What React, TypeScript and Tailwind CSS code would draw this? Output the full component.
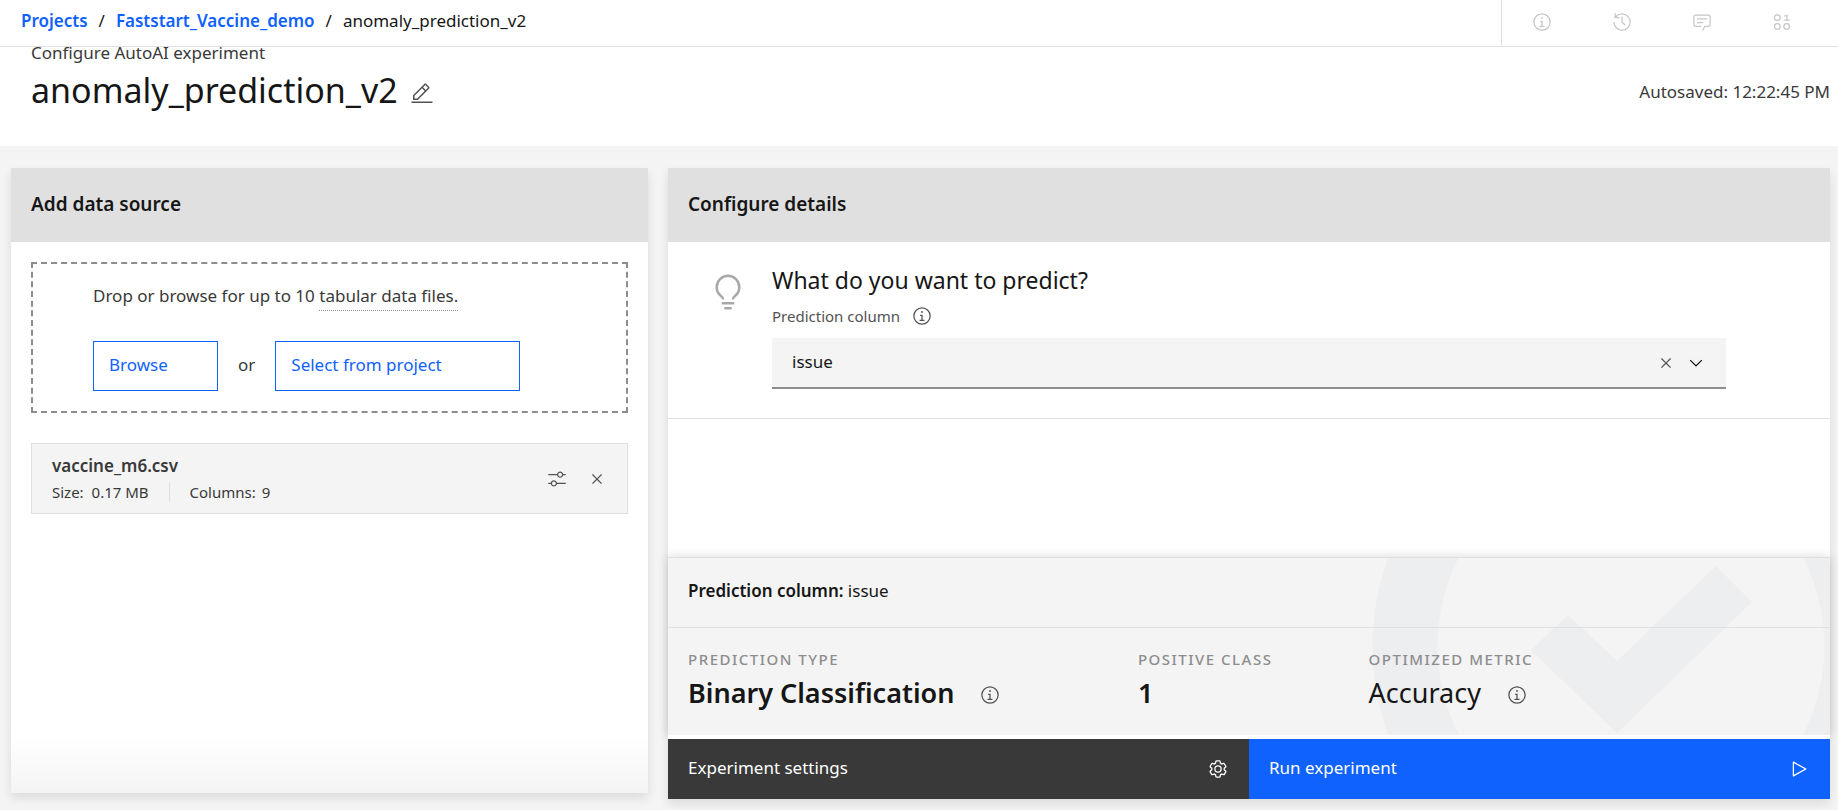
import React, { useState } from 'react';

const ICONS = {
  info: [
    'M17 22 17 14 13 14 13 16 15 16 15 22 12 22 12 24 20 24 20 22z',
    'M16,8a1.5,1.5,0,1,0,1.5,1.5A1.5,1.5,0,0,0,16,8Z',
    'M16,30A14,14,0,1,1,30,16,14,14,0,0,1,16,30ZM16,4A12,12,0,1,0,28,16,12,12,0,0,0,16,4Z',
  ],
  history: [
    'M20.59 22 15 16.41 15 7 17 7 17 15.58 22 20.59 20.59 22z',
    'M16,2A13.94,13.94,0,0,0,6,6.23V2H4v8h8V8H7.08A12,12,0,1,1,4,16H2A14,14,0,1,0,16,2Z',
  ],
  chat: [
    'M17.74,30,16,29l4-7h6a2,2,0,0,0,2-2V8a2,2,0,0,0-2-2H6A2,2,0,0,0,4,8V20a2,2,0,0,0,2,2h9v2H6a4,4,0,0,1-4-4V8A4,4,0,0,1,6,4H26a4,4,0,0,1,4,4V20a4,4,0,0,1-4,4H21.16Z',
    'M8 10H24V12H8z',
    'M8 16H18V18H8z',
  ],
  data: [
    'M8.5,3.5a5.5,5.5,0,1,0,5.5,5.5A5.5,5.5,0,0,0,8.5,3.5ZM8.5,12.5a3.5,3.5,0,1,1,3.5-3.5A3.5,3.5,0,0,1,8.5,12.5Z',
    'M8.5,17.5a5.5,5.5,0,1,0,5.5,5.5A5.5,5.5,0,0,0,8.5,17.5ZM8.5,26.5a3.5,3.5,0,1,1,3.5-3.5A3.5,3.5,0,0,1,8.5,26.5Z',
    'M23.5,17.5a5.5,5.5,0,1,0,5.5,5.5A5.5,5.5,0,0,0,23.5,17.5ZM23.5,26.5a3.5,3.5,0,1,1,3.5-3.5A3.5,3.5,0,0,1,23.5,26.5Z',
    'M25 12 25 4 23 4 23 5 19.5 5 19.5 7 23 7 23 12 19.5 12 19.5 14 28.5 14 28.5 12z',
  ],
  edit: [
    'M2 26H30V28H2z',
    'M25.4,9c.8-.8.8-2,0-2.8L21.8,2.6c-.8-.8-2-.8-2.8,0L4,17.6V24h6.4L25.4,9ZM20.4,4,24,7.6l-3,3L17.4,7ZM6,22V18.4l10-10L19.6,12l-10,10Z',
  ],
  sliders: [
    'M30,8h-4.1c-.5-2.3-2.5-4-4.9-4s-4.4,1.7-4.9,4H2v2h14.1c.5,2.3,2.5,4,4.9,4s4.4-1.7,4.9-4H30V8z M21,12c-1.7,0-3-1.3-3-3s1.3-3,3-3s3,1.3,3,3S22.7,12,21,12z',
    'M2,24h4.1c.5,2.3,2.5,4,4.9,4s4.4-1.7,4.9-4H30v-2H15.9c-.5-2.3-2.5-4-4.9-4s-4.4,1.7-4.9,4H2V24z M11,20c1.7,0,3,1.3,3,3s-1.3,3-3,3s-3-1.3-3-3S9.3,20,11,20z',
  ],
  close: ['M24 9.4 22.6 8 16 14.6 9.4 8 8 9.4 14.6 16 8 22.6 9.4 24 16 17.4 22.6 24 24 22.6 17.4 16 24 9.4z'],
  chevron: ['M16 22 6 12 7.4 10.6 16 19.2 24.6 10.6 26 12z'],
  bulb: [
    'M11 24H21V26H11z',
    'M13 28H19V30H13z',
    'M16,2A10,10,0,0,0,6,12a9.19,9.19,0,0,0,3.46,7.62c1,.93,1.54,1.46,1.54,2.38h2c0-1.84-1.11-2.87-2.19-3.86A7.2,7.2,0,0,1,8,12a8,8,0,0,1,16,0,7.2,7.2,0,0,1-2.82,6.14c-1.07,1-2.18,2-2.18,3.86h2c0-.92.53-1.45,1.54-2.39A9.18,9.18,0,0,0,26,12,10,10,0,0,0,16,2Z',
  ],
  play: ['M7,28a1,1,0,0,1-1-1V5a1,1,0,0,1,1.4819-.8763l20,11a1,1,0,0,1,0,1.7525l-20,11A1,1,0,0,1,7,28ZM8,6.6909V25.3088L24.9248,16Z'],
  gear: [
    'M27,16.76c0-.25,0-.5,0-.76s0-.51,0-.77l1.92-1.68A2,2,0,0,0,29.3,11L26.94,7a2,2,0,0,0-1.73-1,2,2,0,0,0-.64.1l-2.43.82a11.35,11.35,0,0,0-1.31-.75l-.51-2.52a2,2,0,0,0-2-1.61H13.64a2,2,0,0,0-2,1.61l-.51,2.52a11.48,11.48,0,0,0-1.32.75L7.43,6.06A2,2,0,0,0,6.79,6,2,2,0,0,0,5.06,7L2.7,11a2,2,0,0,0,.41,2.51L5,15.24c0,.25,0,.5,0,.76s0,.51,0,.77L3.11,18.45A2,2,0,0,0,2.7,21L5.06,25a2,2,0,0,0,1.73,1,2,2,0,0,0,.64-.1l2.43-.82a11.35,11.35,0,0,0,1.31.75l.51,2.52a2,2,0,0,0,2,1.61h4.72a2,2,0,0,0,2-1.61l.51-2.52a11.48,11.48,0,0,0,1.32-.75l2.42.82a2,2,0,0,0,.64.1,2,2,0,0,0,1.73-1L29.3,21a2,2,0,0,0-.41-2.51ZM25.21,24l-3.43-1.16a8.86,8.86,0,0,1-2.71,1.57L18.36,28H13.64l-.71-3.55a9.36,9.36,0,0,1-2.7-1.57L6.79,24,4.43,20l2.72-2.4a8.9,8.9,0,0,1,0-3.13L4.43,12,6.79,8l3.43,1.16a8.86,8.86,0,0,1,2.71-1.57L13.64,4h4.72l.71,3.55a9.36,9.36,0,0,1,2.7,1.57L25.21,8,27.57,12l-2.72,2.4a8.9,8.9,0,0,1,0,3.13L27.57,20Z',
    'M16,22a6,6,0,1,1,6-6A5.94,5.94,0,0,1,16,22Zm0-10a3.91,3.91,0,0,0-4,4,3.91,3.91,0,0,0,4,4,3.91,3.91,0,0,0,4-4A3.91,3.91,0,0,0,16,12Z',
  ],
};

function Icon({ name, className = 'size-5' }: { name: keyof typeof ICONS; className?: string }) {
  return (
    <svg viewBox="0 0 32 32" fill="currentColor" aria-hidden="true" className={`shrink-0 ${className}`}>
      {ICONS[name].map((d) => (
        <path key={d} d={d} />
      ))}
    </svg>
  );
}

const TOOLS: { name: keyof typeof ICONS; label: string }[] = [
  { name: 'info', label: 'Information' },
  { name: 'history', label: 'History' },
  { name: 'chat', label: 'Comments' },
  { name: 'data', label: 'Data' },
];

function TopBar() {
  return (
    <header className="z-10 flex h-[47px] border-b border-[#e0e0e0] bg-white">
      <nav aria-label="Breadcrumb" className="flex flex-1 items-center pb-1 pl-[21px]">
        <ol className="flex items-center gap-[11px] leading-6">
          <li>
            <a href="#projects" className="font-semibold text-[#0f62fe]">Projects</a>
          </li>
          <li aria-hidden="true">/</li>
          <li>
            <a href="#project" className="font-semibold text-[#0f62fe]">Faststart_Vaccine_demo</a>
          </li>
          <li aria-hidden="true">/</li>
          <li aria-current="page">anomaly_prediction_v2</li>
        </ol>
      </nav>
      <div className="flex border-l border-[#e0e0e0] pr-4 text-[#c6c6c6]">
        {TOOLS.map((tool) => (
          <button key={tool.name} type="button" aria-label={tool.label} className="flex w-20 items-center justify-center pb-0.5">
            <Icon name={tool.name} />
          </button>
        ))}
      </div>
    </header>
  );
}

function PageHeading() {
  return (
    <div className="-mt-1.5 bg-white pr-2 pb-9 pl-[31px]">
      <p className="leading-6 text-[#393939]">Configure AutoAI experiment</p>
      <div className="mt-[5px] flex items-center justify-between">
        <div className="flex items-center gap-3">
          <h1 className="text-[34px] leading-10">anomaly_prediction_v2</h1>
          <button type="button" aria-label="Edit name" className="mt-2 text-[#525252]">
            <Icon name="edit" className="size-6" />
          </button>
        </div>
        <p className="mt-1 leading-6 text-[#393939]">Autosaved: 12:22:45 PM</p>
      </div>
    </div>
  );
}

function CardHeader({ children }: { children: React.ReactNode }) {
  return (
    <h2 className="flex h-[74px] items-center bg-[#e0e0e0] px-5 pb-0.5 text-[19px] leading-6 font-semibold">{children}</h2>
  );
}

function DataSourceCard() {
  return (
    <section className="mb-1.5 flex flex-col bg-white shadow-[0_5px_10px_rgba(0,0,0,0.1)]">
      <CardHeader>Add data source</CardHeader>
      <div className="p-5 pb-0 text-[#393939]">
        <div className="border-2 border-dashed border-[#8d8d8d] py-5 pr-5 pl-[60px]">
          <p className="leading-6">
            Drop or browse for up to 10{' '}
            <span className="border-b border-dotted border-[#8d8d8d] pb-[3px]">tabular data files.</span>
          </p>
          <div className="mt-[33px] flex items-center">
            <button type="button" className="h-[50px] w-[125px] border border-[#0f62fe] px-[15px] pb-0.5 text-left text-[#0f62fe]">
              Browse
            </button>
            <span className="px-5 pb-0.5">or</span>
            <button type="button" className="h-[50px] w-[245px] border border-[#0f62fe] px-[15px] pb-0.5 text-left text-[#0f62fe]">
              Select from project
            </button>
          </div>
        </div>

        <div className="mt-[30px] flex items-center justify-between border border-[#e0e0e0] bg-[#f4f4f4] py-2.5 pr-2.5 pl-5">
          <div>
            <h3 className="leading-6 font-semibold">vaccine_m6.csv</h3>
            <div className="mt-1 mb-px flex text-[15px] leading-5">
              <p className="pr-5">
                Size: <span className="ml-1">0.17 MB</span>
              </p>
              <p className="border-l border-[#e0e0e0] pl-5">
                Columns: <span className="ml-0.5">9</span>
              </p>
            </div>
          </div>
          <div className="flex text-[#525252]">
            <button type="button" aria-label="Configure file" className="flex size-10 items-center justify-center">
              <Icon name="sliders" />
            </button>
            <button type="button" aria-label="Remove file" className="flex size-10 items-center justify-center">
              <Icon name="close" />
            </button>
          </div>
        </div>
      </div>
      <div className="mt-auto h-[60px] bg-linear-to-b from-white to-[#f4f4f4]" />
    </section>
  );
}

function Metric({ label, value, bold, info }: { label: string; value: string; bold?: boolean; info?: boolean }) {
  return (
    <div>
      <dt className="text-[15px] leading-5 font-medium tracking-widest text-[#8d8d8d] uppercase">{label}</dt>
      <dd className="mt-1.5 flex items-center gap-[26px]">
        <span className={bold ? 'text-[27px] leading-9 font-semibold' : 'text-[27px] leading-9'}>{value}</span>
        {info && (
          <button type="button" aria-label={`About ${label}`} className="mt-1 text-[#525252]">
            <Icon name="info" />
          </button>
        )}
      </dd>
    </div>
  );
}

function PredictionSummary() {
  return (
    <div className="relative overflow-hidden border-t border-[#e0e0e0] bg-[#f4f4f4] shadow-[0_0_10px_rgba(0,0,0,0.16)]">
      <svg viewBox="0 0 460 177" aria-hidden="true" className="absolute top-0 right-0 h-full">
        <circle cx="261" cy="88" r="226" fill="none" stroke="#edeef0" strokeWidth="65" />
        <path d="M161 92 198 57 247 103 346 8 382 44 247 175z" fill="#edeef0" />
      </svg>
      <p className="relative px-5 pt-5 pb-6 leading-[25px]">
        <strong className="font-semibold">Prediction column:</strong> issue
      </p>
      <dl className="relative grid grid-cols-[39fr_20fr_40fr] border-t border-[#e0e0e0] pt-[21px] pb-6 pl-5">
        <Metric label="Prediction type" value="Binary Classification" bold info />
        <Metric label="Positive class" value="1" bold />
        <Metric label="Optimized metric" value="Accuracy" info />
      </dl>
    </div>
  );
}

function ConfigureCard() {
  const [column, setColumn] = useState('issue');
  return (
    <section className="flex flex-col bg-white shadow-[0_5px_10px_rgba(0,0,0,0.1)]">
      <CardHeader>Configure details</CardHeader>
      <div className="flex gap-6 border-b border-[#e0e0e0] pt-[22px] pr-[104px] pb-[29px] pl-10">
        <Icon name="bulb" className="mt-2 size-10 text-[#a8a8a8]" />
        <div className="flex-1">
          <h3 className="text-[23px] leading-8">What do you want to predict?</h3>
          <div className="mt-2 mb-2.5 flex items-center gap-3 text-[#525252]">
            <label htmlFor="prediction-column" className="text-[15px] leading-6">Prediction column</label>
            <button type="button" aria-label="About prediction column">
              <Icon name="info" />
            </button>
          </div>
          <div className="flex h-[51px] items-stretch border-b-2 border-[#8d8d8d] bg-[#f4f4f4] pr-[15px]">
            <input
              id="prediction-column"
              role="combobox"
              aria-expanded="false"
              aria-controls="prediction-options"
              value={column}
              onChange={(e) => setColumn(e.target.value)}
              className="min-w-0 flex-1 bg-transparent pb-0.5 pl-5 outline-none"
            />
            <button type="button" aria-label="Clear selection" onClick={() => setColumn('')} className="flex w-[30px] items-center justify-center text-[#525252]">
              <Icon name="close" />
            </button>
            <button type="button" aria-label="Open menu" className="flex w-[30px] items-center justify-center">
              <Icon name="chevron" />
            </button>
          </div>
        </div>
      </div>
      <div className="mt-auto">
        <PredictionSummary />
        <div className="relative grid grid-cols-2 border-t-4 border-white text-white">
          <button type="button" className="flex h-[60px] items-center justify-between bg-[#393939] pr-[21px] pl-5">
            <span className="pb-0.5">Experiment settings</span>
            <Icon name="gear" />
          </button>
          <button type="button" className="flex h-[60px] items-center justify-between bg-[#0f62fe] pr-[21px] pl-5">
            <span className="pb-0.5">Run experiment</span>
            <Icon name="play" />
          </button>
        </div>
      </div>
    </section>
  );
}

export default function App() {
  return (
    <div className="flex min-h-screen flex-col bg-[#f4f4f4] font-['Noto_Sans',sans-serif] text-[17px] text-[#161616]">
      <TopBar />
      <PageHeading />
      <main className="grid flex-1 grid-cols-[637fr_1162fr] gap-5 pt-[22px] pr-2 pb-[11px] pl-[11px]">
        <DataSourceCard />
        <ConfigureCard />
      </main>
    </div>
  );
}
